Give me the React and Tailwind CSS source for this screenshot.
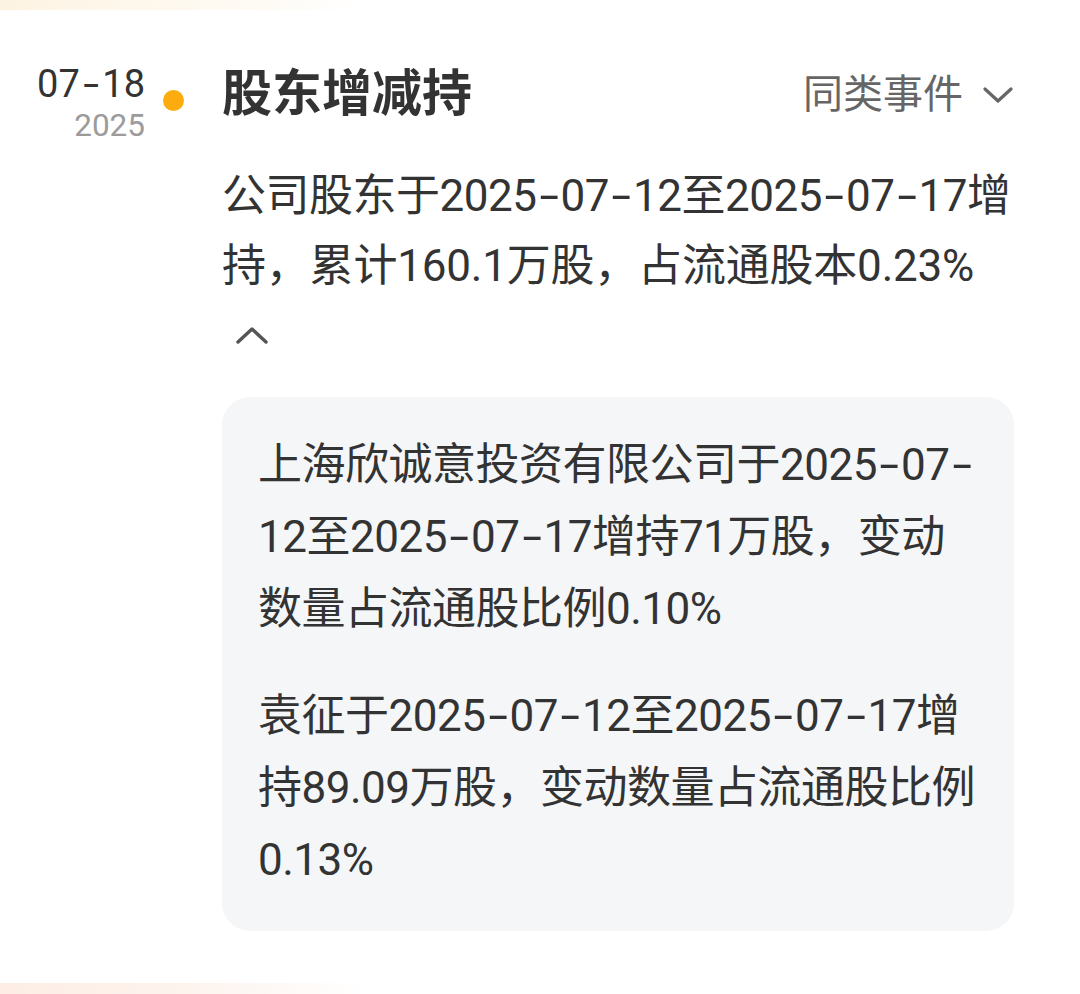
import React from "react";

function ChevronDown({ className }) {
  return (
    <svg className={className} viewBox="0 0 30 18" fill="none">
      <polyline points="2,3 15,15 28,3" stroke="#666666" strokeWidth="3.2" strokeLinecap="round" strokeLinejoin="round" />
    </svg>
  );
}

function ChevronUp({ className }) {
  return (
    <svg className={className} viewBox="0 0 32 18" fill="none">
      <polyline points="2,16 16,3 30,16" stroke="#555555" strokeWidth="3.4" strokeLinecap="round" strokeLinejoin="round" />
    </svg>
  );
}

function T({ text, dash = "inline-block mx-[6.2px] scale-x-[1.6]" }) {
  const parts = text.split("-");
  return (
    <>
      {parts.map((p, i) => (
        <React.Fragment key={i}>
          {p}
          {i < parts.length - 1 && <span className={dash}>-</span>}
        </React.Fragment>
      ))}
    </>
  );
}

export default function App() {
  return (
    <div className="w-[1080px] h-[994px] bg-white flex flex-col font-['Roboto','Noto_Sans_CJK_SC',sans-serif] overflow-hidden">
      <div className="h-[10px] w-full bg-gradient-to-r from-[#fdf3e2] via-[#fefaf3] via-[22%] to-white to-[34%]" />
      <div className="flex items-start pt-[54px]">
        <div className="w-[145px] flex flex-col items-end">
          <div className="text-[38px] leading-[40px] text-[#333333]">
            <T text="07-18" dash="inline-block mx-[6px] scale-x-[1.5]" />
          </div>
          <div className="text-[31.5px] leading-[40px] text-[#9b9b9b] mt-[2px]">2025</div>
        </div>
        <div className="ml-[18px] mt-[26px] w-[21px] h-[21px] rounded-full bg-[#fdac10]" />
        <div className="ml-[38px] w-[792px] flex flex-col">
          <div className="flex items-center justify-between h-[60px]">
            <div className="text-[50px] leading-[60px] font-bold text-[#333333]">股东增减持</div>
            <div className="flex items-center gap-[20px] mt-[2px]">
              <span className="text-[40px] leading-[60px] text-[#666666]">同类事件</span>
              <ChevronDown className="w-[30px] h-[18px] mr-[1px]" />
            </div>
          </div>
          <p className="mt-[37px] text-[44px] tracking-[-0.5px] leading-[70px] text-[#333333] whitespace-nowrap">
            <T text="公司股东于2025-07-12至2025-07-17增" />
            <br />
            <span className="tracking-[-0.2px]">持，累计160.1万股，占流通股本0.23%</span>
          </p>
          <div className="mt-[14px] h-[40px] flex items-center pl-[14px]">
            <ChevronUp className="w-[32px] h-[18px]" />
          </div>
          <div className="mt-[42px] bg-[#f5f6f8] rounded-[28px] pl-[36px] pr-[20px] pt-[32px] pb-[35px] flex flex-col gap-[35px]">
            <p className="text-[44px] tracking-[-0.5px] leading-[72px] text-[#333333] whitespace-nowrap">
              <T text="上海欣诚意投资有限公司于2025-07-" />
              <br />
              <T text="12至2025-07-17增持71万股，变动" />
              <br />
              数量占流通股比例0.10%
            </p>
            <p className="text-[44px] tracking-[-0.5px] leading-[72px] text-[#333333] whitespace-nowrap">
              <T text="袁征于2025-07-12至2025-07-17增" />
              <br />
              持89.09万股，变动数量占流通股比例
              <br />
              0.13%
            </p>
          </div>
        </div>
      </div>
      <div className="mt-auto h-[11px] w-full bg-gradient-to-r from-[#fdede4] via-[#fdf5f0] via-[20%] to-white to-[34%]" />
    </div>
  );
}
